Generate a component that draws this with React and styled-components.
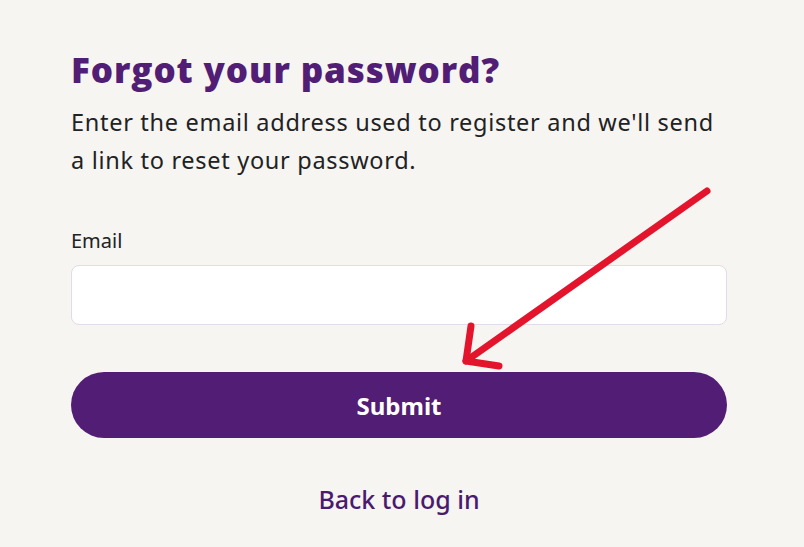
import React from 'react';
import styled, { createGlobalStyle } from 'styled-components';

const Global = createGlobalStyle`
  html, body {
    margin: 0;
    padding: 0;
    background: #f6f5f2;
  }
  * { box-sizing: border-box; }
`;

const Page = styled.div`
  position: relative;
  width: 804px;
  height: 547px;
  overflow: hidden;
  background: #f6f5f2;
  font-family: "Noto Sans", "Open Sans", sans-serif;
`;

const Form = styled.form`
  width: 656px;
  margin-left: 71px;
  padding-top: 47px;
  display: flex;
  flex-direction: column;
`;

const Title = styled.h1`
  margin: 0;
  font-family: "Open Sans", sans-serif;
  font-weight: 800;
  font-size: 35px;
  line-height: 46px;
  letter-spacing: 0.9px;
  color: #521d74;
`;

const Intro = styled.p`
  margin: 10px 0 0;
  font-family: "Noto Sans", sans-serif;
  font-size: 23.5px;
  line-height: 38px;
  letter-spacing: 0.7px;
  color: #222222;
`;

const Label = styled.label`
  margin-top: 50px;
  font-size: 20px;
  line-height: 24px;
  color: #222222;
`;

const Input = styled.input`
  margin-top: 12px;
  height: 60px;
  width: 100%;
  border: 1px solid #e2dbe8;
  border-radius: 8px;
  background: #ffffff;
  font-size: 18px;
  padding: 0 16px;
  outline: none;
`;

const SubmitButton = styled.button`
  margin-top: 47px;
  height: 66px;
  width: 100%;
  border: none;
  border-radius: 33px;
  background: #521d74;
  color: #ffffff;
  font-family: "Noto Sans", sans-serif;
  font-weight: 700;
  font-size: 24px;
  cursor: pointer;
`;

const BackLink = styled.a`
  margin-top: 44px;
  align-self: center;
  font-size: 25px;
  font-weight: 500;
  color: #4a1a6e;
  text-decoration: none;
`;

const Arrow = styled.svg`
  position: absolute;
  left: 0;
  top: 0;
  pointer-events: none;
`;

export default function App() {
  return (
    <Page>
      <Global />
      <Form onSubmit={e => e.preventDefault()}>
        <Title>Forgot your password?</Title>
        <Intro>
          Enter the email address used to register and we'll send a link to reset your password.
        </Intro>
        <Label htmlFor="email">Email</Label>
        <Input id="email" type="email" />
        <SubmitButton type="submit">Submit</SubmitButton>
        <BackLink href="#">Back to log in</BackLink>
      </Form>
      <Arrow width="804" height="547" viewBox="0 0 804 547">
        <g stroke="#e3142c" strokeWidth="7" strokeLinecap="round" strokeLinejoin="round" fill="none">
          <line x1="707" y1="191" x2="466" y2="361" />
          <polyline points="471,326 466,361 499,366" />
        </g>
      </Arrow>
    </Page>
  );
}
